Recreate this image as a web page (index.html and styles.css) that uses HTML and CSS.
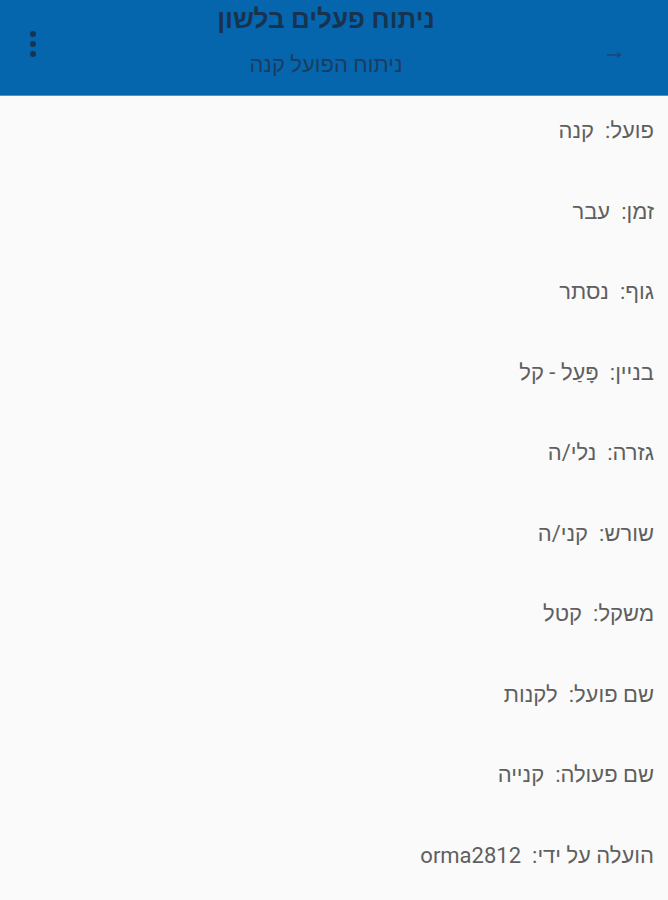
FILE: index.html
```html
<!DOCTYPE html>
<html lang="he" dir="rtl">
<head>
  <meta charset="UTF-8">
  <meta name="viewport" content="width=device-width, initial-scale=1.0">
  <title>ניתוח פעלים בלשון</title>
  <link rel="stylesheet" href="styles.css">
</head>
<body>
  <header class="app-bar">
    <div class="back">
      <svg width="16" height="8" viewBox="0 0 16 8">
        <path d="M1 4H14M11 1.5L14.5 4L11 6.5" fill="none" stroke="#1d4672" stroke-width="1.4"/>
      </svg>
    </div>
    <div class="titles">
      <h1>ניתוח פעלים בלשון</h1>
      <h2>ניתוח הפועל קנה</h2>
    </div>
    <div class="menu">
      <span></span><span></span><span></span>
    </div>
  </header>

  <ul class="details">
    <li><span class="label">פועל:</span><span class="value">קנה</span></li>
    <li><span class="label">זמן:</span><span class="value">עבר</span></li>
    <li><span class="label">גוף:</span><span class="value">נסתר</span></li>
    <li><span class="label">בניין:</span><span class="value">פָּעַל - קל</span></li>
    <li><span class="label">גזרה:</span><span class="value">נלי/ה</span></li>
    <li><span class="label">שורש:</span><span class="value">קני/ה</span></li>
    <li><span class="label">משקל:</span><span class="value">קטל</span></li>
    <li><span class="label">שם פועל:</span><span class="value">לקנות</span></li>
    <li><span class="label">שם פעולה:</span><span class="value">קנייה</span></li>
    <li><span class="label">הועלה על ידי:</span><span class="value">orma2812</span></li>
  </ul>
</body>
</html>
```

FILE: styles.css
```css
* {
  box-sizing: border-box;
}
body {
  margin: 0;
  font-family: Roboto, "Liberation Sans", "DejaVu Sans", sans-serif;
  background: #fafafa;
  color: #555;
}
.app-bar {
  height: 96px;
  background: #0566ad;
  display: flex;
  align-items: center;
  justify-content: space-between;
  padding: 0 46px 0 30px;
  border-bottom: 1px solid #5b8fc0;
  color: #17365a;
}
.back {
  display: flex;
  margin-top: 14px;
}
.titles {
  flex: 1;
  text-align: center;
  margin-left: 10px;
  margin-top: -14px;
}
.titles h1 {
  margin: 0;
  font-size: 26px;
  line-height: 30px;
  font-weight: bold;
  color: #17334f;
}
.titles h2 {
  margin: 18px 0 0;
  font-size: 22px;
  line-height: 26px;
  font-weight: normal;
  color: #1c3c5e;
}
.menu {
  display: flex;
  flex-direction: column;
  gap: 4px;
  margin-top: -8px;
}
.menu span {
  width: 6px;
  height: 6px;
  border-radius: 50%;
  background: #163554;
}
.details {
  list-style: none;
  margin: 0;
  padding: 23px 14px 0;
}
.details li {
  font-size: 22px;
  line-height: 24px;
  margin-bottom: 56.5px;
  color: #5f5f5f;
}
.details .value {
  margin-right: 11px;
}
```
